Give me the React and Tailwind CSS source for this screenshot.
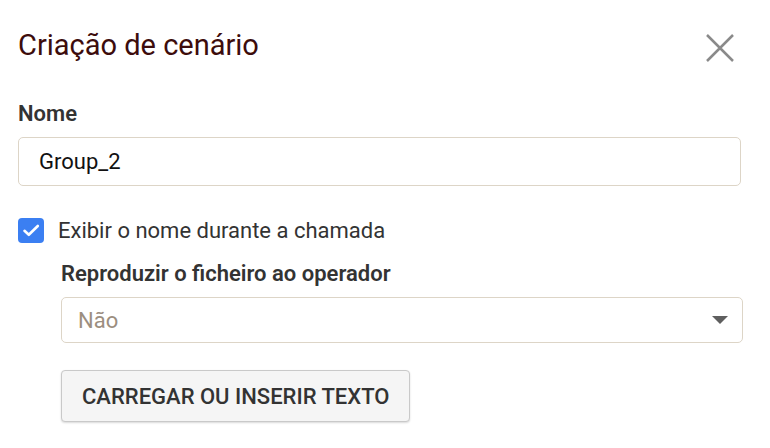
import React from "react";

export default function App() {
  return (
    <div className="w-[770px] h-[448px] bg-white overflow-hidden" style={{ fontFamily: "Roboto, 'Noto Sans', sans-serif" }}>
      <div className="pl-[18px] pr-[28px]">
        <div className="flex items-center justify-between h-[90px]">
          <h1 className="text-[29px] text-[#3d0c0c] leading-none font-normal">Criação de cenário</h1>
          <svg width="28" height="28" viewBox="0 0 28 28" className="mr-[8px] mt-[6px]">
            <path d="M1 1 L27 27 M27 1 L1 27" stroke="#8a8a8a" strokeWidth="2.5" />
          </svg>
        </div>
        <div className="text-[22px] font-semibold text-[#333] leading-none mt-[13px]">Nome</div>
        <div className="mt-[12px] h-[49px] w-[723px] border border-[#ddd5c7] rounded-[5px] flex items-center px-[20px] text-[22px] text-[#111]">
          Group_2
        </div>
        <div className="flex items-center mt-[31px] h-[26px]">
          <div className="w-[26px] h-[25px] rounded-[4px] bg-[#3b7ff2]">
            <svg width="26" height="25" viewBox="0 0 26 25">
              <path d="M6.5 12.8 L10.8 16.8 L19.8 8" stroke="white" strokeWidth="2.6" fill="none" strokeLinecap="round" strokeLinejoin="round" />
            </svg>
          </div>
          <span className="ml-[14px] text-[22px] text-[#333]">Exibir o nome durante a chamada</span>
        </div>
        <div className="ml-[43px]">
          <div className="text-[22px] font-semibold text-[#333] leading-none mt-[20px]">Reproduzir o ficheiro ao operador</div>
          <div className="mt-[12px] h-[46px] w-[682px] border border-[#ddd5c7] rounded-[5px] flex items-center justify-between pl-[16px] pr-[14px]">
            <span className="text-[22px] text-[#9c8e7f]">Não</span>
            <svg width="16" height="8" viewBox="0 0 16 8">
              <path d="M0 0 L16 0 L8 8 Z" fill="#5f5f5f" />
            </svg>
          </div>
          <button className="mt-[27px] h-[52px] px-[20px] bg-[#f5f5f5] border border-[#c9c9c9] rounded-[4px] shadow-[0_1px_2px_rgba(0,0,0,0.15)] text-[22px] font-medium text-[#333] uppercase">
            Carregar ou inserir texto
          </button>
        </div>
      </div>
    </div>
  );
}
